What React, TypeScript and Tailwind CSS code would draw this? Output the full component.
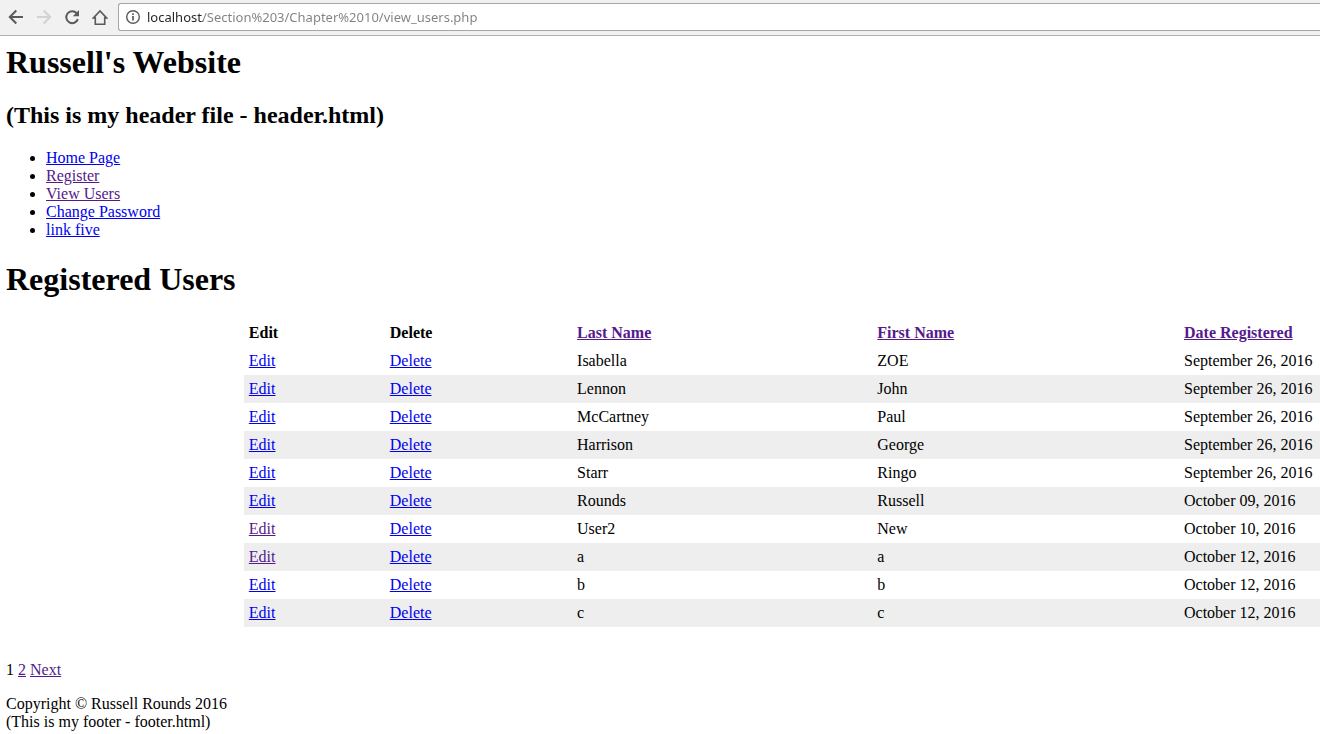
const BLUE = 'text-[#0000ee] underline';
const VISITED = 'text-[#551a8b] underline';

type NavLink = { label: string; visited: boolean };

const navLinks: NavLink[] = [
  { label: 'Home Page', visited: false },
  { label: 'Register', visited: true },
  { label: 'View Users', visited: true },
  { label: 'Change Password', visited: false },
  { label: 'link five', visited: false },
];

type User = { last: string; first: string; date: string; edited?: boolean };

const users: User[] = [
  { last: 'Isabella', first: 'ZOE', date: 'September 26, 2016' },
  { last: 'Lennon', first: 'John', date: 'September 26, 2016' },
  { last: 'McCartney', first: 'Paul', date: 'September 26, 2016' },
  { last: 'Harrison', first: 'George', date: 'September 26, 2016' },
  { last: 'Starr', first: 'Ringo', date: 'September 26, 2016' },
  { last: 'Rounds', first: 'Russell', date: 'October 09, 2016' },
  { last: 'User2', first: 'New', date: 'October 10, 2016', edited: true },
  { last: 'a', first: 'a', date: 'October 12, 2016', edited: true },
  { last: 'b', first: 'b', date: 'October 12, 2016' },
  { last: 'c', first: 'c', date: 'October 12, 2016' },
];

function Toolbar() {
  return (
    <div className="flex h-9 items-center border-b border-[#b0b0b0] bg-[#f1f1f1] pb-1 pl-2 pt-[3px] text-[#5a5a5a]">
      <div className="flex items-center gap-3">
        <button type="button" aria-label="Back">
          <svg className="block size-4" viewBox="0 0 16 16" fill="none" stroke="currentColor" strokeWidth="2">
            <path d="M15 8H2.4M8.3 1.5 1.8 8l6.5 6.5" />
          </svg>
        </button>
        <button type="button" aria-label="Forward" disabled className="text-[#d2d2d2]">
          <svg className="block size-4" viewBox="0 0 16 16" fill="none" stroke="currentColor" strokeWidth="2">
            <path d="M1 8h12.6M7.7 1.5 14.2 8l-6.5 6.5" />
          </svg>
        </button>
        <button type="button" aria-label="Reload">
          <svg className="block size-4" viewBox="0 0 16 16" fill="none" stroke="currentColor" strokeWidth="2">
            <path d="M13.9 10.2A6 6 0 1 1 12.6 4" />
            <path d="M15 1v6.2H8.8z" fill="currentColor" stroke="none" />
          </svg>
        </button>
        <button type="button" aria-label="Home">
          <svg className="block size-4" viewBox="0 0 16 16" fill="none" stroke="currentColor" strokeWidth="1.6">
            <path d="M1.4 8.9H3.3V15.2h9.4V8.9h1.9L8 2z" />
          </svg>
        </button>
      </div>
      <div className="ml-[10px] flex h-7 flex-1 items-center gap-[7px] rounded-l-[3px] border border-r-0 border-[#a6a6a6] bg-white pl-[7px]">
        <svg className="block size-[14px] shrink-0" viewBox="0 0 14 14" fill="none" stroke="currentColor" aria-hidden="true">
          <circle cx="7" cy="7" r="6.3" strokeWidth="1.4" />
          <path d="M7 6v4.6M7 3.2v1.7" strokeWidth="1.7" />
        </svg>
        <input
          type="text"
          aria-label="Address"
          defaultValue="localhost/Section%203/Chapter%2010/view_users.php"
          className="min-w-0 flex-1 bg-linear-to-r from-[#222222] from-[56px] to-[#808080] to-[56px] bg-clip-text font-['Noto_Sans',sans-serif] text-[13px] leading-5 text-transparent caret-black outline-none"
        />
      </div>
    </div>
  );
}

function UsersTable() {
  const cell = 'p-[5px] text-left';
  return (
    <div className="ml-[18.1%] mt-[21px]">
      <table className="w-full table-fixed border-collapse whitespace-nowrap">
        <colgroup>
          <col className="w-[13.1%]" />
          <col className="w-[17.4%]" />
          <col className="w-[27.9%]" />
          <col className="w-[28.5%]" />
          <col className="w-[13.1%]" />
        </colgroup>
        <thead>
          <tr>
            <th className={cell}>Edit</th>
            <th className={cell}>Delete</th>
            <th className={cell}><a href="#last" className={VISITED}>Last Name</a></th>
            <th className={cell}><a href="#first" className={VISITED}>First Name</a></th>
            <th className={cell}><a href="#date" className={VISITED}>Date Registered</a></th>
          </tr>
        </thead>
        <tbody>
          {users.map((u) => (
            <tr key={u.last} className="even:bg-[#eeeeee]">
              <td className={cell}><a href="#edit" className={u.edited ? VISITED : BLUE}>Edit</a></td>
              <td className={cell}><a href="#delete" className={BLUE}>Delete</a></td>
              <td className={cell}>{u.last}</td>
              <td className={cell}>{u.first}</td>
              <td className={cell}>{u.date}</td>
            </tr>
          ))}
        </tbody>
      </table>
    </div>
  );
}

export default function App() {
  return (
    <div className="overflow-x-hidden bg-white text-black">
      <Toolbar />
      <div className="pl-[6px] pt-2 font-['Liberation_Serif',serif] text-[16px] leading-[18px]">
        <header>
          <h1 className="text-[32px] font-bold leading-[37px]">Russell's Website</h1>
          <h2 className="mt-5 text-[24px] font-bold leading-[28px]">(This is my header file - header.html)</h2>
          <nav className="mt-5">
            <ul className="list-disc pl-10">
              {navLinks.map((l) => (
                <li key={l.label}>
                  <a href="#nav" className={l.visited ? VISITED : BLUE}>{l.label}</a>
                </li>
              ))}
            </ul>
          </nav>
        </header>
        <main>
          <h1 className="mt-[22px] text-[32px] font-bold leading-[37px]">Registered Users</h1>
          <UsersTable />
          <p className="mt-[34px]">
            1 <a href="#page2" className={VISITED}>2</a> <a href="#next" className={VISITED}>Next</a>
          </p>
        </main>
        <footer className="mt-4">
          <p>Copyright © Russell Rounds 2016</p>
          <p>(This is my footer - footer.html)</p>
        </footer>
      </div>
    </div>
  );
}
